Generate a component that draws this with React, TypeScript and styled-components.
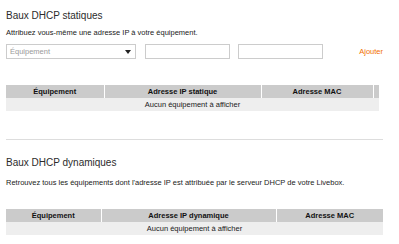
import styled, { createGlobalStyle } from "styled-components";

const GlobalStyle = createGlobalStyle`
  body {
    margin: 0;
    background: #fff;
    font-family: "Liberation Sans", Arial, sans-serif;
    color: #222;
  }
`;

const Page = styled.div`
  padding: 10px 16px 0 6px;
`;

const Section = styled.section`
  display: flex;
  flex-direction: column;
`;

const Title = styled.h2<{ $gap?: number }>`
  margin: ${(p) => p.$gap || 0}px 0 0;
  font-size: 10px;
  line-height: 12px;
  font-weight: normal;
  color: #2b2b2b;
`;

const Description = styled.p<{ $gap: number }>`
  margin: ${(p) => p.$gap}px 0 0;
  font-size: 7.5px;
  line-height: 9px;
  color: #222;
`;

const FormRow = styled.div`
  display: flex;
  align-items: center;
  margin-top: 7px;
`;

const SelectBox = styled.div`
  box-sizing: border-box;
  width: 130px;
  height: 15px;
  border: 1px solid #cccccc;
  display: flex;
  align-items: center;
  justify-content: space-between;
  padding: 0 4px 0 3px;
  font-size: 7.5px;
  color: #9a9a9a;
`;

const Arrow = styled.span`
  width: 0;
  height: 0;
  border-left: 3.5px solid transparent;
  border-right: 3.5px solid transparent;
  border-top: 4px solid #222;
`;

const TextInput = styled.input<{ $gap: number }>`
  box-sizing: border-box;
  width: 85px;
  height: 15px;
  margin-left: ${(p) => p.$gap}px;
  border: 1px solid #cccccc;
  padding: 0 3px;
  outline: none;
`;

const AddButton = styled.button`
  margin-left: auto;
  background: none;
  border: none;
  padding: 0;
  font-family: inherit;
  font-size: 7.5px;
  color: #f16e00;
  cursor: pointer;
`;

const Table = styled.table<{ $width?: number; $gap: number }>`
  margin-top: ${(p) => p.$gap}px;
  width: ${(p) => (p.$width ? `${p.$width}px` : "100%")};
  border-collapse: collapse;
  table-layout: fixed;
  font-size: 7.5px;
`;

const HeadCell = styled.th`
  height: 13px;
  padding: 0;
  background: #cbcbcb;
  color: #111;
  font-weight: bold;
  text-align: center;
  border-left: 1px solid #fff;
  &:first-child {
    border-left: none;
  }
`;

const EmptyCell = styled.td`
  height: 13px;
  padding: 0;
  background: #eeeeee;
  color: #1a1a1a;
  text-align: center;
`;

const Divider = styled.hr`
  margin: 28px 0 0;
  border: none;
  border-top: 1px solid #dddddd;
`;

interface ILeaseTable {
  columns: string[];
  widths: number[];
  width?: number;
  gap: number;
}

const LeaseTable = ({ columns, widths, width, gap }: ILeaseTable) => (
  <Table $width={width} $gap={gap}>
    <colgroup>
      {widths.map((w, i) => (
        <col key={i} style={{ width: w }} />
      ))}
    </colgroup>
    <thead>
      <tr>
        {columns.map((c, i) => (
          <HeadCell key={i}>{c}</HeadCell>
        ))}
      </tr>
    </thead>
    <tbody>
      <tr>
        <EmptyCell colSpan={columns.length}>Aucun équipement à afficher</EmptyCell>
      </tr>
    </tbody>
  </Table>
);

const App = () => {
  return (
    <>
      <GlobalStyle />
      <Page>
        <Section>
          <Title>Baux DHCP statiques</Title>
          <Description $gap={6}>
            Attribuez vous-même une adresse IP à votre équipement.
          </Description>
          <FormRow>
            <SelectBox>
              <span>Équipement</span>
              <Arrow />
            </SelectBox>
            <TextInput $gap={9} />
            <TextInput $gap={8} />
            <AddButton>Ajouter</AddButton>
          </FormRow>
          <LeaseTable
            gap={26}
            width={373}
            widths={[98, 157, 112, 6]}
            columns={["Équipement", "Adresse IP statique", "Adresse MAC", ""]}
          />
        </Section>
        <Divider />
        <Section>
          <Title $gap={17}>Baux DHCP dynamiques</Title>
          <Description $gap={9}>
            Retrouvez tous les équipements dont l'adresse IP est attribuée par le
            serveur DHCP de votre Livebox.
          </Description>
          <LeaseTable
            gap={22}
            widths={[95, 175, 107]}
            columns={["Équipement", "Adresse IP dynamique", "Adresse MAC"]}
          />
        </Section>
      </Page>
    </>
  );
};

export default App;
